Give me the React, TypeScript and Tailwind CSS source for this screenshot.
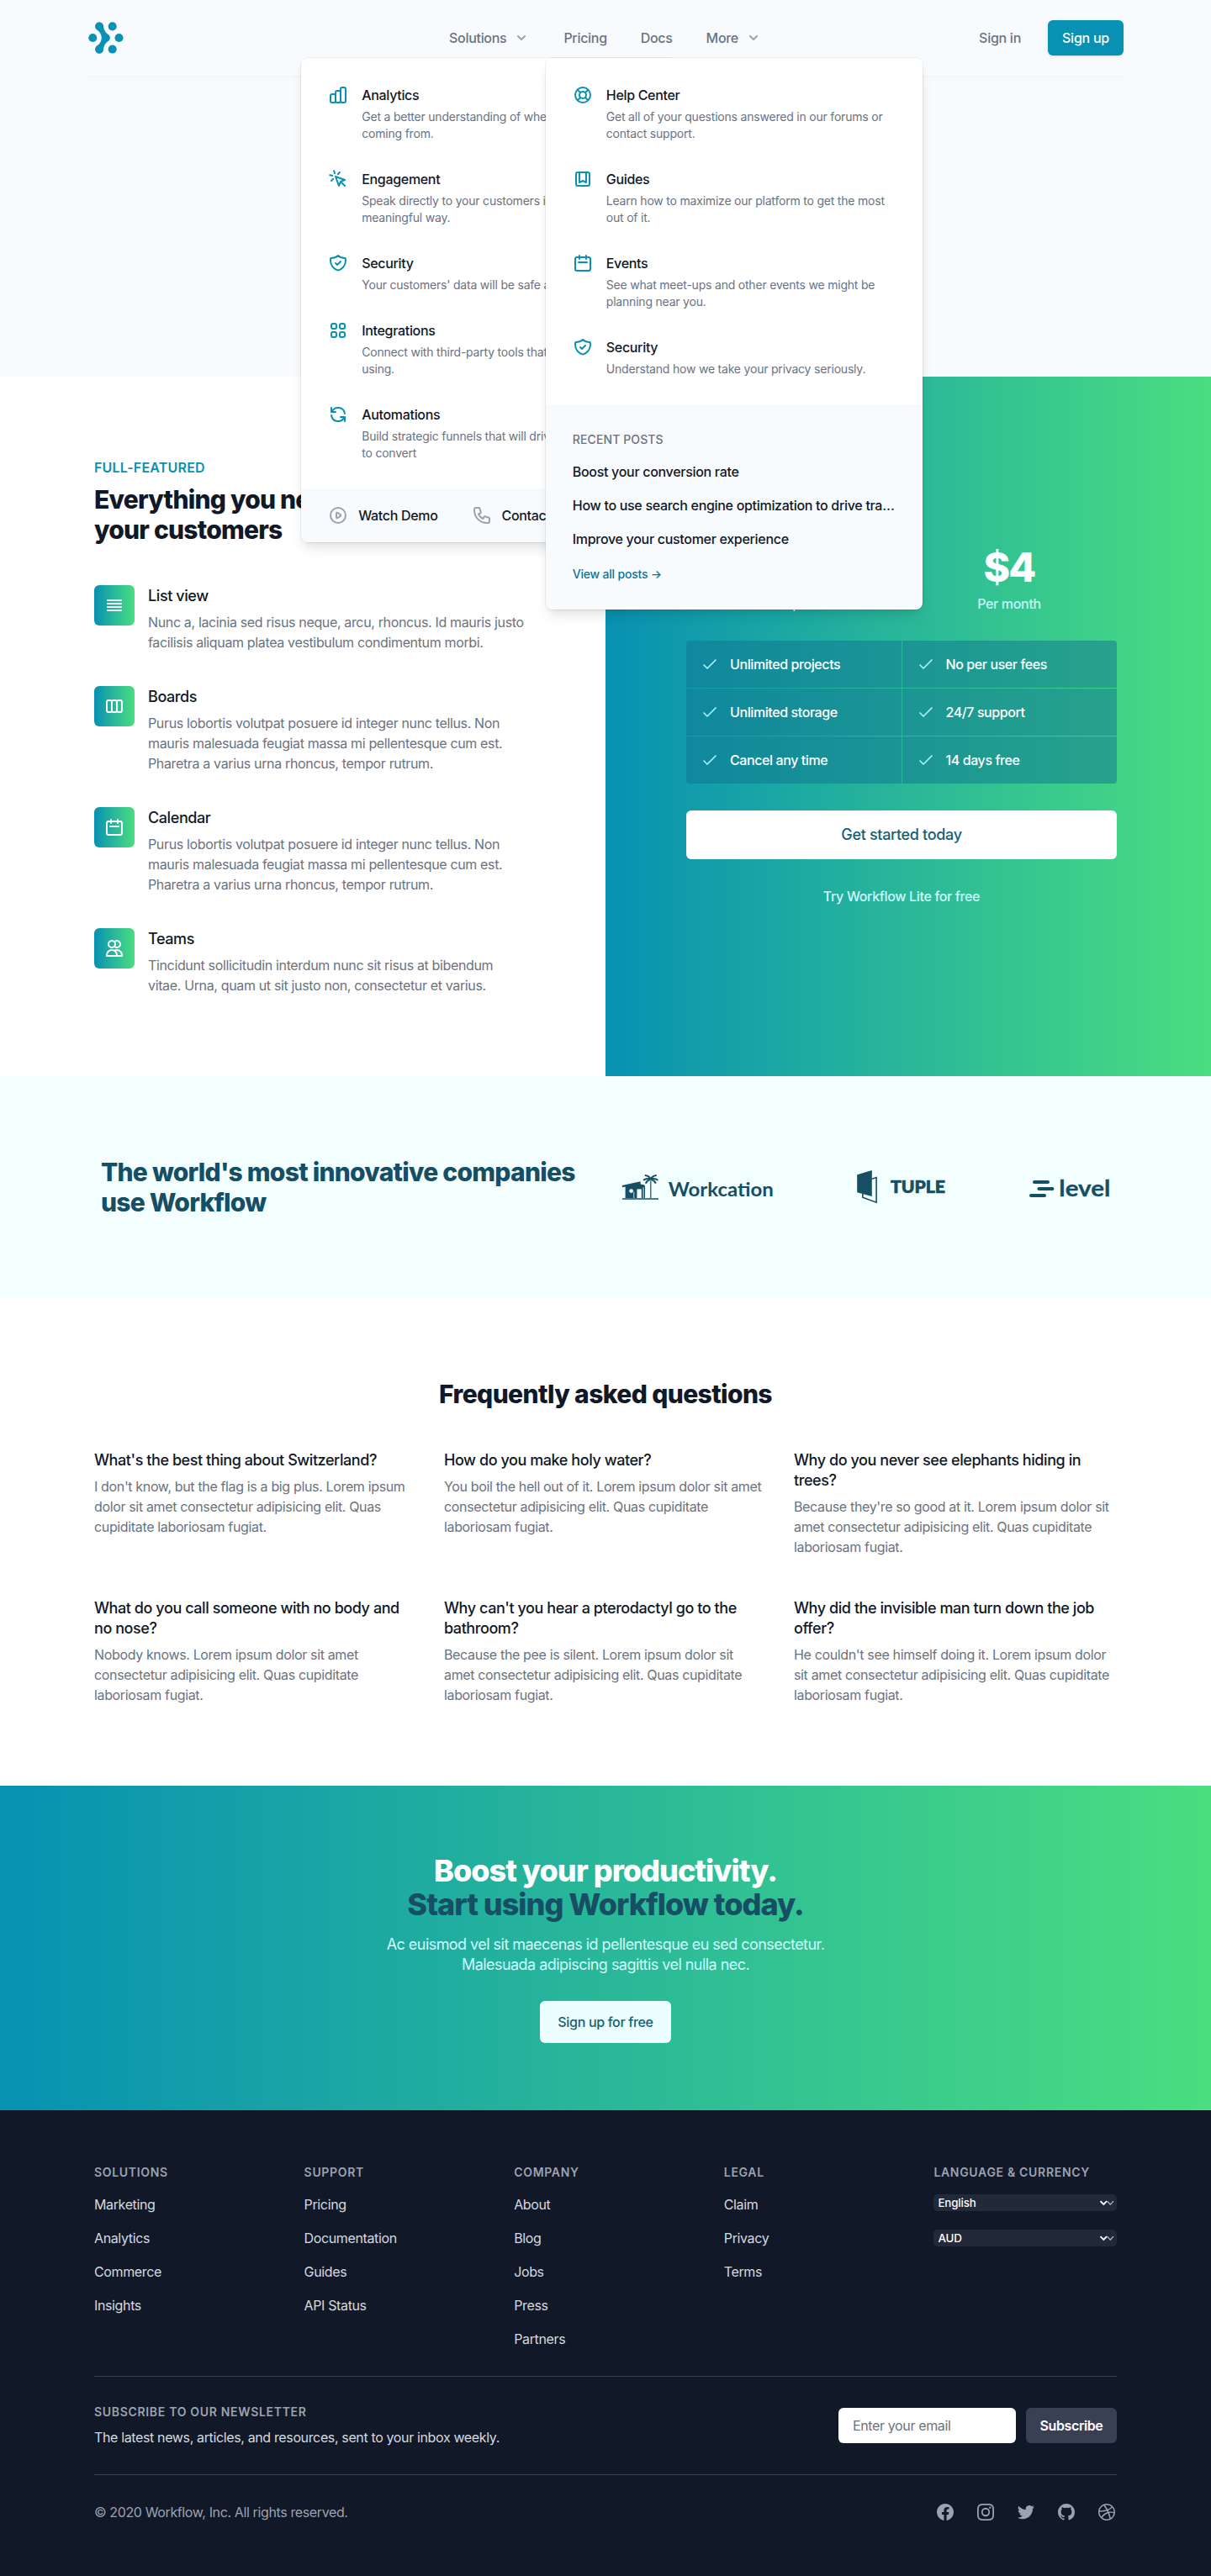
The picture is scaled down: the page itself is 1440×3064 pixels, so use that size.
import type { ReactNode } from "react";

const ICONS = {
  chart:
    "M9 19v-6a2 2 0 00-2-2H5a2 2 0 00-2 2v6a2 2 0 002 2h2a2 2 0 002-2zm0 0V9a2 2 0 012-2h2a2 2 0 012 2v10m-6 0a2 2 0 002 2h2a2 2 0 002-2m0 0V5a2 2 0 012-2h2a2 2 0 012 2v14a2 2 0 01-2 2h-2a2 2 0 01-2-2z",
  cursor:
    "M15 15l-2 5L9 9l11 4-5 2zm0 0l5 5M7.188 2.239l.777 2.897M5.136 7.965l-2.898-.777M13.95 4.05l-2.122 2.122m-5.657 5.656l-2.12 2.122",
  shield:
    "M9 12l2 2 4-4m5.618-4.016A11.955 11.955 0 0112 2.944a11.955 11.955 0 01-8.618 3.04A12.02 12.02 0 003 9c0 5.591 3.824 10.29 9 11.622 5.176-1.332 9-6.03 9-11.622 0-1.042-.133-2.052-.382-3.016z",
  grid: "M4 6a2 2 0 012-2h2a2 2 0 012 2v2a2 2 0 01-2 2H6a2 2 0 01-2-2V6zM14 6a2 2 0 012-2h2a2 2 0 012 2v2a2 2 0 01-2 2h-2a2 2 0 01-2-2V6zM4 16a2 2 0 012-2h2a2 2 0 012 2v2a2 2 0 01-2 2H6a2 2 0 01-2-2v-2zM14 16a2 2 0 012-2h2a2 2 0 012 2v2a2 2 0 01-2 2h-2a2 2 0 01-2-2v-2z",
  refresh:
    "M4 4v5h.582m15.356 2A8.001 8.001 0 004.582 9m0 0H9m11 11v-5h-.581m0 0a8.003 8.003 0 01-15.357-2m15.357 2H15",
  play: "M14.752 11.168l-3.197-2.132A1 1 0 0010 9.87v4.263a1 1 0 001.555.832l3.197-2.132a1 1 0 000-1.664z M21 12a9 9 0 11-18 0 9 9 0 0118 0z",
  phone:
    "M3 5a2 2 0 012-2h3.28a1 1 0 01.948.684l1.498 4.493a1 1 0 01-.502 1.21l-2.257 1.13a11.042 11.042 0 005.516 5.516l1.13-2.257a1 1 0 011.21-.502l4.493 1.498a1 1 0 01.684.949V19a2 2 0 01-2 2h-1C9.716 21 3 14.284 3 6V5z",
  support:
    "M18.364 5.636l-3.536 3.536m0 5.656l3.536 3.536M9.172 9.172L5.636 5.636m3.536 9.192l-3.536 3.536M21 12a9 9 0 11-18 0 9 9 0 0118 0zm-5 0a4 4 0 11-8 0 4 4 0 018 0z",
  bookmark:
    "M16 4v12l-4-2-4 2V4M6 20h12a2 2 0 002-2V6a2 2 0 00-2-2H6a2 2 0 00-2 2v12a2 2 0 002 2z",
  calendar:
    "M8 7V3m8 4V3m-9 8h10M5 21h14a2 2 0 002-2V7a2 2 0 00-2-2H5a2 2 0 00-2 2v12a2 2 0 002 2z",
  list: "M4 6h16M4 10h16M4 14h16M4 18h16",
  boards:
    "M9 17V7m0 10a2 2 0 01-2 2H5a2 2 0 01-2-2V7a2 2 0 012-2h2a2 2 0 012 2m0 10a2 2 0 002 2h2a2 2 0 002-2M9 7a2 2 0 012-2h2a2 2 0 012 2m0 10V7m0 10a2 2 0 002 2h2a2 2 0 002-2V7a2 2 0 00-2-2h-2a2 2 0 00-2 2",
  users:
    "M12 4.354a4 4 0 110 5.292M15 21H3v-1a6 6 0 0112 0v1zm0 0h6v-1a6 6 0 00-9-5.197M13 7a4 4 0 11-8 0 4 4 0 018 0z",
  check: "M5 13l4 4L19 7",
};

type IconName = keyof typeof ICONS;

function Icon({ name, className }: { name: IconName; className: string }) {
  return (
    <svg className={className} fill="none" viewBox="0 0 24 24" stroke="currentColor" strokeWidth={name === "check" ? 1.7 : 2} strokeLinecap="round" strokeLinejoin="round">
      <path d={ICONS[name]} />
    </svg>
  );
}

function Logo() {
  return (
    <svg className="h-10 w-auto" viewBox="0 0 35 32" fill="#0891b2">
      <path d="M15.258 26.865a4.043 4.043 0 01-1.133 2.917A4.006 4.006 0 0111.253 31a3.992 3.992 0 01-2.872-1.218 4.028 4.028 0 01-1.133-2.917c.009-.698.2-1.382.557-1.981.356-.6.863-1.094 1.47-1.433-.024.109.09-.055 0 0l1.86-1.652a8.495 8.495 0 002.304-5.793c0-2.926-1.711-5.901-4.17-7.457.094.055-.036-.094 0 0A3.952 3.952 0 017.8 7.116a3.975 3.975 0 01-.557-1.98 4.042 4.042 0 011.133-2.918A4.006 4.006 0 0111.247 1a3.99 3.99 0 012.872 1.218 4.025 4.025 0 011.133 2.917 8.521 8.521 0 002.347 5.832l.817.8c.326.285.668.551 1.024.798.621.33 1.142.826 1.504 1.431a3.902 3.902 0 01-1.504 5.442c.033-.067-.063.036 0 0a8.968 8.968 0 00-3.024 3.183 9.016 9.016 0 00-1.158 4.244z" />
      <circle cx="23.75" cy="5.1" r="4.02" />
      <circle cx="23.75" cy="26.86" r="4.02" />
      <circle cx="29.99" cy="15.98" r="4.02" />
      <circle cx="5.01" cy="15.98" r="4.02" />
    </svg>
  );
}

function Chevron() {
  return (
    <svg className="ml-2 h-5 w-5 text-[#9ca3af]" viewBox="0 0 20 20" fill="currentColor">
      <path fillRule="evenodd" clipRule="evenodd" d="M5.293 7.293a1 1 0 011.414 0L10 10.586l3.293-3.293a1 1 0 111.414 1.414l-4 4a1 1 0 01-1.414 0l-4-4a1 1 0 010-1.414z" />
    </svg>
  );
}

type MenuEntry = { icon: IconName; title: string; text: string };

const solutions: MenuEntry[] = [
  { icon: "chart", title: "Analytics", text: "Get a better understanding of where your traffic is coming from." },
  { icon: "cursor", title: "Engagement", text: "Speak directly to your customers in a more meaningful way." },
  { icon: "shield", title: "Security", text: "Your customers' data will be safe and secure." },
  { icon: "grid", title: "Integrations", text: "Connect with third-party tools that you're already using." },
  { icon: "refresh", title: "Automations", text: "Build strategic funnels that will drive your customers to convert" },
];

const resources: MenuEntry[] = [
  { icon: "support", title: "Help Center", text: "Get all of your questions answered in our forums or contact support." },
  { icon: "bookmark", title: "Guides", text: "Learn how to maximize our platform to get the most out of it." },
  { icon: "calendar", title: "Events", text: "See what meet-ups and other events we might be planning near you." },
  { icon: "shield", title: "Security", text: "Understand how we take your privacy seriously." },
];

function MenuPanel({ entries, children }: { entries: MenuEntry[]; children: ReactNode }) {
  return (
    <div className="absolute top-full left-1/2 z-10 mt-3 w-[448px] -translate-x-1/2 rounded-lg shadow-[0_10px_15px_-3px_rgba(0,0,0,0.1),0_4px_6px_-2px_rgba(0,0,0,0.05)]">
      <div className="overflow-hidden rounded-lg shadow-[0_0_0_1px_rgba(0,0,0,0.05)]">
        <div className="grid gap-8 bg-white p-8">
          {entries.map((e) => (
            <a key={e.title} className="flex items-start">
              <Icon name={e.icon} className="h-6 w-6 shrink-0 text-[#0891b2]" />
              <div className="ml-4">
                <p className="text-base leading-6 font-medium tracking-[-0.02em] text-[#111827]">{e.title}</p>
                <p className="mt-1 text-sm leading-5 font-normal tracking-[-0.0146em] text-[#6b7280]">{e.text}</p>
              </div>
            </a>
          ))}
        </div>
        {children}
      </div>
    </div>
  );
}

function Header() {
  return (
    <header className="h-[448px] bg-[#f8fbfd]">
      <div className="mx-auto max-w-7xl px-6">
        <div className="flex items-center justify-between border-b-2 border-[#f4f6f9] py-6">
          <div className="flex w-0 flex-1">
            <Logo />
          </div>
          <nav className="flex gap-10 text-base leading-6 font-medium tracking-[-0.019em] text-[#6b7280]">
            <div className="relative">
              <button className="flex items-center">
                Solutions
                <Chevron />
              </button>
              <MenuPanel entries={solutions}>
                <div className="flex gap-10 bg-[#f8fbfd] px-8 py-5 text-[#111827]">
                  <a className="flex items-center tracking-[-0.02em]">
                    <Icon name="play" className="h-6 w-6 text-[#9ca3af]" />
                    <span className="ml-3">Watch Demo</span>
                  </a>
                  <a className="flex items-center tracking-[-0.02em]">
                    <Icon name="phone" className="h-6 w-6 text-[#9ca3af]" />
                    <span className="ml-3">Contact Sales</span>
                  </a>
                </div>
              </MenuPanel>
            </div>
            <a>Pricing</a>
            <a>Docs</a>
            <div className="relative">
              <button className="flex items-center">
                More
                <Chevron />
              </button>
              <MenuPanel entries={resources}>
                <div className="bg-[#f8fbfd] p-8">
                  <h3 className="text-sm leading-5 font-medium tracking-[0.008em] text-[#6b7280] uppercase">Recent Posts</h3>
                  <ul className="mt-4 flex flex-col gap-4 text-base leading-6 tracking-[-0.019em] text-[#111827]">
                    <li className="truncate">Boost your conversion rate</li>
                    <li className="truncate">How to use search engine optimization to drive traffic to your site</li>
                    <li className="truncate">Improve your customer experience</li>
                  </ul>
                  <p className="mt-5 text-sm leading-5 tracking-[-0.0146em] text-[#0e7490]">View all posts →</p>
                </div>
              </MenuPanel>
            </div>
          </nav>
          <div className="flex w-0 flex-1 items-center justify-end gap-8 text-base leading-6 font-medium whitespace-nowrap">
            <a className="tracking-[-0.017em] text-[#6b7280]">Sign in</a>
            <a className="rounded-md border border-transparent bg-[#0891b2] px-4 py-2 tracking-[-0.015em] text-white shadow-sm">Sign up</a>
          </div>
        </div>
      </div>
    </header>
  );
}

const features: MenuEntry[] = [
  { icon: "list", title: "List view", text: "Nunc a, lacinia sed risus neque, arcu, rhoncus. Id mauris justo facilisis aliquam platea vestibulum condimentum morbi." },
  { icon: "boards", title: "Boards", text: "Purus lobortis volutpat posuere id integer nunc tellus. Non mauris malesuada feugiat massa mi pellentesque cum est. Pharetra a varius urna rhoncus, tempor rutrum." },
  { icon: "calendar", title: "Calendar", text: "Purus lobortis volutpat posuere id integer nunc tellus. Non mauris malesuada feugiat massa mi pellentesque cum est. Pharetra a varius urna rhoncus, tempor rutrum." },
  { icon: "users", title: "Teams", text: "Tincidunt sollicitudin interdum nunc sit risus at bibendum vitae. Urna, quam ut sit justo non, consectetur et varius." },
];

const perks = ["Unlimited projects", "No per user fees", "Unlimited storage", "24/7 support", "Cancel any time", "14 days free"];

function Price({ amount, label }: { amount: string; label: string }) {
  return (
    <div className="flex flex-col text-center">
      <span className="-mb-px pt-px text-5xl leading-none font-extrabold tracking-[-0.04em] text-white">{amount}</span>
      <span className="mt-2 text-base leading-6 font-medium tracking-[-0.02em] text-[#c2f8fd]">{label}</span>
    </div>
  );
}

function FeaturesAndPricing() {
  return (
    <section className="grid grid-cols-2">
      <div className="bg-white py-24 pl-28">
        <div className="w-[512px]">
          <h2 className="text-base leading-6 font-semibold tracking-[0.012em] text-[#0891b2] uppercase">Full-featured</h2>
          <p className="mt-2 text-3xl leading-9 font-extrabold tracking-[-0.0256em] text-[#111827]">
            Everything you need to talk to
            <br />
            your customers
          </p>
          <div className="mt-12 flex flex-col gap-10">
            {features.map((f) => (
              <div key={f.title} className="flex items-start">
                <div className="flex h-12 w-12 shrink-0 items-center justify-center rounded-md bg-[linear-gradient(to_right,#0891b2,#4ade80)]">
                  <Icon name={f.icon} className="h-6 w-6 text-white" />
                </div>
                <div className="ml-4">
                  <h3 className="-mb-px pt-px text-lg leading-6 font-medium tracking-[-0.023em] text-[#111827]">{f.title}</h3>
                  <p className="mt-2 text-base leading-6 tracking-[-0.022em] text-[#6b7280]">{f.text}</p>
                </div>
              </div>
            ))}
          </div>
        </div>
      </div>
      <div className="flex items-center bg-[linear-gradient(to_right,#0891b2,#4ade80)] pl-24">
        <div className="flex w-[512px] flex-col gap-8">
          <div className="grid grid-cols-2">
            <Price amount="$99" label="Setup fee" />
            <Price amount="$4" label="Per month" />
          </div>
          <ul className="grid grid-cols-2 gap-px overflow-hidden rounded">
            {perks.map((p) => (
              <li key={p} className="flex items-center gap-3 bg-[#0e7490]/50 p-4 text-base leading-6 font-medium tracking-[-0.0255em] text-white">
                <Icon name="check" className="h-6 w-6 text-[#a5f3fc]" />
                {p}
              </li>
            ))}
          </ul>
          <a className="rounded-md border border-transparent bg-white px-8 py-4 text-center text-lg leading-6 font-medium tracking-[-0.0184em] text-[#155e75]">Get started today</a>
          <a className="text-center text-base leading-6 font-medium tracking-[-0.0215em] text-[#cffafe]">Try Workflow Lite for free</a>
        </div>
      </div>
    </section>
  );
}

function WorkcationLogo() {
  return (
    <svg className="h-12 w-[181px]" viewBox="0 0 181 48" fill="#164e63">
      <path d="M1 37.2h43v1.6H1z" />
      <path d="M.8 21.9 22.4 17.2l.4 3.2 4.4 1.2.8 1.6V37H4.6V23.6L.9 24.3z" />
      <circle cx="11.6" cy="28.6" r="2.4" fill="#f3ffff" />
      <path d="M18.4 37V26.4h5.4V37z" fill="#f3ffff" />
      <path d="M25.6 37V24.2h.9V37zM14.4 37v-7.4h.8V37z" fill="#f3ffff" />
      <path d="M34.2 16.5h1.2V37h-1.2z" />
      <path
        d="M34.8 14.6C33 11.6 30.6 10.2 27.8 10.1M34.8 14.6C36.6 11.6 39 10.2 41.8 10.1M34.8 14.4C31.4 13.4 28.6 13.8 26 15.8M34.8 14.4C38.2 13.4 41 13.8 43.4 15.8M34.6 15C31.6 15.6 29.8 17.3 28.8 19.6M35 15C38 15.6 39.8 17.3 40.8 19.6"
        fill="none"
        stroke="#164e63"
        strokeWidth="2"
      />
      <text x="55.8" y="35.4" fontFamily="Lato" fontWeight="700" fontSize="22.5" textLength="125" lengthAdjust="spacingAndGlyphs">
        Workcation
      </text>
    </svg>
  );
}

function TupleLogo() {
  return (
    <svg className="h-12 w-[106px]" viewBox="0 0 106 48" fill="#164e63">
      <path d="M.2 9.2 17.8 3.9v31L.2 30.2z" />
      <path d="M18 14.2 23.1 12.6V42.2L6.8 36.2V32" fill="none" stroke="#164e63" strokeWidth="1.6" />
      <text x="40" y="31.3" fontFamily="Lato" fontWeight="900" fontSize="20" textLength="65" lengthAdjust="spacingAndGlyphs" stroke="#164e63" strokeWidth=".7">
        TUPLE
      </text>
    </svg>
  );
}

function LevelLogo() {
  return (
    <svg className="h-12 w-24" viewBox="0 0 96 48" fill="#164e63">
      <rect x="4" y="15.9" width="20" height="4" rx="2" />
      <rect x="9.4" y="23.9" width="20" height="4" rx="2" />
      <rect x="0" y="32" width="20" height="4" rx="2" />
      <text x="35.3" y="35.3" fontFamily="Lato" fontWeight="700" fontSize="26" textLength="61" lengthAdjust="spacingAndGlyphs" stroke="#164e63" strokeWidth=".3">
        level
      </text>
    </svg>
  );
}

function LogoCloud() {
  return (
    <section className="flex items-center justify-between bg-[#f3ffff] px-[120px] py-24">
      <h2 className="w-[580px] text-3xl leading-9 font-extrabold tracking-[-0.025em] text-[#164e63]">The world's most innovative companies use Workflow</h2>
      <div className="flex w-[581px] items-center justify-between">
        <WorkcationLogo />
        <TupleLogo />
        <LevelLogo />
      </div>
    </section>
  );
}

const faqs = [
  ["What's the best thing about Switzerland?", "I don't know, but the flag is a big plus. Lorem ipsum dolor sit amet consectetur adipisicing elit. Quas cupiditate laboriosam fugiat."],
  ["How do you make holy water?", "You boil the hell out of it. Lorem ipsum dolor sit amet consectetur adipisicing elit. Quas cupiditate laboriosam fugiat."],
  ["Why do you never see elephants hiding in trees?", "Because they're so good at it. Lorem ipsum dolor sit amet consectetur adipisicing elit. Quas cupiditate laboriosam fugiat."],
  ["What do you call someone with no body and no nose?", "Nobody knows. Lorem ipsum dolor sit amet consectetur adipisicing elit. Quas cupiditate laboriosam fugiat."],
  ["Why can't you hear a pterodactyl go to the bathroom?", "Because the pee is silent. Lorem ipsum dolor sit amet consectetur adipisicing elit. Quas cupiditate laboriosam fugiat."],
  ["Why did the invisible man turn down the job offer?", "He couldn't see himself doing it. Lorem ipsum dolor sit amet consectetur adipisicing elit. Quas cupiditate laboriosam fugiat."],
];

function Faq() {
  return (
    <section className="bg-white px-28 py-24">
      <h2 className="text-center text-3xl leading-9 font-extrabold tracking-[-0.02em] text-[#111827]">Frequently asked questions</h2>
      <dl className="mt-12 grid grid-cols-3 gap-x-8 gap-y-12">
        {faqs.map(([q, a]) => (
          <div key={q}>
            <dt className="-mb-px pt-px text-lg leading-6 font-medium tracking-[-0.024em] text-[#111827]">{q}</dt>
            <dd className="mt-2 text-base leading-6 tracking-[-0.022em] text-[#6b7280]">{a}</dd>
          </div>
        ))}
      </dl>
    </section>
  );
}

function CallToAction() {
  return (
    <section className="flex flex-col items-center bg-[linear-gradient(to_right,#0891b2,#4ade80)] py-20 text-center">
      <h2 className="-mb-px pt-px text-4xl leading-10 font-extrabold tracking-[-0.0275em] text-white">
        Boost your productivity.
        <br />
        <span className="text-[#164e63]">Start using Workflow today.</span>
      </h2>
      <p className="mt-4 -mb-px pt-px text-lg leading-6 tracking-[-0.0303em] text-[#cffafe]">
        Ac euismod vel sit maecenas id pellentesque eu sed consectetur.
        <br />
        Malesuada adipiscing sagittis vel nulla nec.
      </p>
      <a className="mt-8 rounded-md border border-transparent bg-[#ecfeff] px-5 py-3 text-base leading-6 font-medium tracking-[-0.02em] text-[#155e75]">Sign up for free</a>
    </section>
  );
}

const footerColumns: { title: string; links: string[] }[] = [
  { title: "Solutions", links: ["Marketing", "Analytics", "Commerce", "Insights"] },
  { title: "Support", links: ["Pricing", "Documentation", "Guides", "API Status"] },
  { title: "Company", links: ["About", "Blog", "Jobs", "Press", "Partners"] },
  { title: "Legal", links: ["Claim", "Privacy", "Terms"] },
];

function FooterHeading({ children }: { children: ReactNode }) {
  return <h3 className="text-sm leading-5 font-semibold tracking-[0.049em] text-[#9ca3af] uppercase">{children}</h3>;
}

function Select({ value }: { value: string }) {
  return (
    <div className="relative">
      <select className="block h-5 w-full appearance-none rounded-[5px] bg-[#222938] px-[5px] text-[13.333px] leading-5 font-medium tracking-[-0.01em] text-white">
        <option>{value}</option>
      </select>
      <svg className="absolute top-[6.5px] right-[3px] h-[7px] w-[18px]" viewBox="0 0 18 7" fill="none">
        <path d="M9.6 1.2 13.2 5.2 17 1.2" stroke="#c3c8d1" strokeWidth="1.1" />
        <path d="M1.5 1.2 5.3 5 9.1 1.2" stroke="#fff" strokeWidth="1.9" />
      </svg>
    </div>
  );
}

const socials = [
  "M22 12c0-5.523-4.477-10-10-10S2 6.477 2 12c0 4.991 3.657 9.128 8.438 9.878v-6.987h-2.54V12h2.54V9.797c0-2.506 1.492-3.89 3.777-3.89 1.094 0 2.238.195 2.238.195v2.46h-1.26c-1.243 0-1.63.771-1.63 1.562V12h2.773l-.443 2.89h-2.33v6.988C18.343 21.128 22 16.991 22 12z",
  "M12.315 2c2.43 0 2.784.013 3.808.06 1.064.049 1.791.218 2.427.465a4.902 4.902 0 011.772 1.153 4.902 4.902 0 011.153 1.772c.247.636.416 1.363.465 2.427.048 1.067.06 1.407.06 4.123v.08c0 2.643-.012 2.987-.06 4.043-.049 1.064-.218 1.791-.465 2.427a4.902 4.902 0 01-1.153 1.772 4.902 4.902 0 01-1.772 1.153c-.636.247-1.363.416-2.427.465-1.067.048-1.407.06-4.123.06h-.08c-2.643 0-2.987-.012-4.043-.06-1.064-.049-1.791-.218-2.427-.465a4.902 4.902 0 01-1.772-1.153 4.902 4.902 0 01-1.153-1.772c-.247-.636-.416-1.363-.465-2.427-.047-1.024-.06-1.379-.06-3.808v-.63c0-2.43.013-2.784.06-3.808.049-1.064.218-1.791.465-2.427a4.902 4.902 0 011.153-1.772A4.902 4.902 0 015.45 2.525c.636-.247 1.363-.416 2.427-.465C8.901 2.013 9.256 2 11.685 2h.63zm-.081 1.802h-.468c-2.456 0-2.784.011-3.807.058-.975.045-1.504.207-1.857.344-.467.182-.8.398-1.15.748-.35.35-.566.683-.748 1.15-.137.353-.3.882-.344 1.857-.047 1.023-.058 1.351-.058 3.807v.468c0 2.456.011 2.784.058 3.807.045.975.207 1.504.344 1.857.182.466.399.8.748 1.15.35.35.683.566 1.15.748.353.137.882.3 1.857.344 1.054.048 1.37.058 4.041.058h.08c2.597 0 2.917-.01 3.96-.058.976-.045 1.505-.207 1.858-.344.466-.182.8-.398 1.15-.748.35-.35.566-.683.748-1.15.137-.353.3-.882.344-1.857.048-1.055.058-1.37.058-4.041v-.08c0-2.597-.01-2.917-.058-3.96-.045-.976-.207-1.505-.344-1.858a3.097 3.097 0 00-.748-1.15 3.098 3.098 0 00-1.15-.748c-.353-.137-.882-.3-1.857-.344-1.023-.047-1.351-.058-3.807-.058zM12 6.865a5.135 5.135 0 110 10.27 5.135 5.135 0 010-10.27zm0 1.802a3.333 3.333 0 100 6.666 3.333 3.333 0 000-6.666zm5.338-3.205a1.2 1.2 0 110 2.4 1.2 1.2 0 010-2.4z",
  "M8.29 20.251c7.547 0 11.675-6.253 11.675-11.675 0-.178 0-.355-.012-.53A8.348 8.348 0 0022 5.92a8.19 8.19 0 01-2.357.646 4.118 4.118 0 001.804-2.27 8.224 8.224 0 01-2.605.996 4.107 4.107 0 00-6.993 3.743 11.65 11.65 0 01-8.457-4.287 4.106 4.106 0 001.27 5.477A4.072 4.072 0 012.8 9.713v.052a4.105 4.105 0 003.292 4.022 4.095 4.095 0 01-1.853.07 4.108 4.108 0 003.834 2.85A8.233 8.233 0 012 18.407a11.616 11.616 0 006.29 1.84",
  "M12 2C6.477 2 2 6.484 2 12.017c0 4.425 2.865 8.18 6.839 9.504.5.092.682-.217.682-.483 0-.237-.008-.868-.013-1.703-2.782.605-3.369-1.343-3.369-1.343-.454-1.158-1.11-1.466-1.11-1.466-.908-.62.069-.608.069-.608 1.003.07 1.531 1.032 1.531 1.032.892 1.53 2.341 1.088 2.91.832.092-.647.35-1.088.636-1.338-2.22-.253-4.555-1.113-4.555-4.951 0-1.093.39-1.988 1.029-2.688-.103-.253-.446-1.272.098-2.65 0 0 .84-.27 2.75 1.026A9.564 9.564 0 0112 6.844c.85.004 1.705.115 2.504.337 1.909-1.296 2.747-1.027 2.747-1.027.546 1.379.202 2.398.1 2.651.64.7 1.028 1.595 1.028 2.688 0 3.848-2.339 4.695-4.566 4.943.359.309.678.92.678 1.855 0 1.338-.012 2.419-.012 2.747 0 .268.18.58.688.482A10.019 10.019 0 0022 12.017C22 6.484 17.522 2 12 2z",
  "M12 2C6.48 2 2 6.48 2 12s4.48 10 10 10c5.51 0 10-4.48 10-10S17.51 2 12 2zm6.605 4.61a8.502 8.502 0 011.93 5.314c-.281-.054-3.101-.629-5.943-.271-.065-.141-.12-.293-.184-.445a25.416 25.416 0 00-.564-1.236c3.145-1.28 4.577-3.124 4.761-3.362zM12 3.475c2.17 0 4.154.813 5.662 2.148-.152.216-1.443 1.941-4.48 3.08-1.399-2.57-2.95-4.675-3.189-5A8.687 8.687 0 0112 3.475zm-3.633.803a53.896 53.896 0 013.167 4.935c-3.992 1.063-7.517 1.04-7.896 1.04a8.581 8.581 0 014.729-5.975zM3.453 12.01v-.26c.37.01 4.512.065 8.775-1.215.25.477.477.965.694 1.453-.109.033-.228.065-.336.098-4.404 1.42-6.747 5.303-6.942 5.629a8.522 8.522 0 01-2.19-5.705zM12 20.547a8.482 8.482 0 01-5.239-1.8c.152-.315 1.888-3.656 6.703-5.337.022-.01.033-.01.054-.022a35.318 35.318 0 011.823 6.475 8.4 8.4 0 01-3.341.684zm4.761-1.465c-.086-.52-.542-3.015-1.659-6.084 2.679-.423 5.022.271 5.314.369a8.468 8.468 0 01-3.655 5.715z",
];

function Footer() {
  return (
    <footer className="bg-[#111827] px-28 py-16">
      <div className="grid grid-cols-5 gap-8">
        {footerColumns.map((c) => (
          <div key={c.title}>
            <FooterHeading>{c.title}</FooterHeading>
            <ul className="mt-4 flex flex-col gap-4 text-base leading-6 tracking-[-0.023em] text-[#d5d9e0]">
              {c.links.map((l) => (
                <li key={l}>{l}</li>
              ))}
            </ul>
          </div>
        ))}
        <div>
          <FooterHeading>Language &amp; Currency</FooterHeading>
          <div className="mt-4 flex flex-col gap-[22px]">
            <Select value="English" />
            <Select value="AUD" />
          </div>
        </div>
      </div>
      <div className="mt-8 flex items-center justify-between border-t border-[#3a4052] pt-8">
        <div>
          <FooterHeading>Subscribe to our newsletter</FooterHeading>
          <p className="mt-2 text-base leading-6 tracking-[-0.0227em] text-[#d5d9e0]">The latest news, articles, and resources, sent to your inbox weekly.</p>
        </div>
        <form className="flex gap-3 text-base leading-6">
          <input
            className="w-[211px] rounded-md border border-transparent bg-white px-4 py-2 tracking-[-0.023em] placeholder:text-[#6b7280]"
            placeholder="Enter your email"
          />
          <button type="button" className="w-[108px] rounded-md border border-transparent bg-[#3a4053] py-2 font-semibold tracking-[-0.025em] text-white">
            Subscribe
          </button>
        </form>
      </div>
      <div className="mt-8 flex items-center justify-between border-t border-[#3a4052] pt-8">
        <p className="text-base leading-6 tracking-[-0.0235em] text-[#9ca3af]">© 2020 Workflow, Inc. All rights reserved.</p>
        <div className="flex gap-6 text-[#9ca3af]">
          {socials.map((d) => (
            <svg key={d} className="h-6 w-6" viewBox="0 0 24 24" fill="currentColor">
              <path fillRule="evenodd" clipRule="evenodd" d={d} />
            </svg>
          ))}
        </div>
      </div>
    </footer>
  );
}

export default function App() {
  return (
    <div className="w-[1440px] bg-white font-[Inter,sans-serif] antialiased">
      <Header />
      <FeaturesAndPricing />
      <LogoCloud />
      <Faq />
      <CallToAction />
      <Footer />
    </div>
  );
}
